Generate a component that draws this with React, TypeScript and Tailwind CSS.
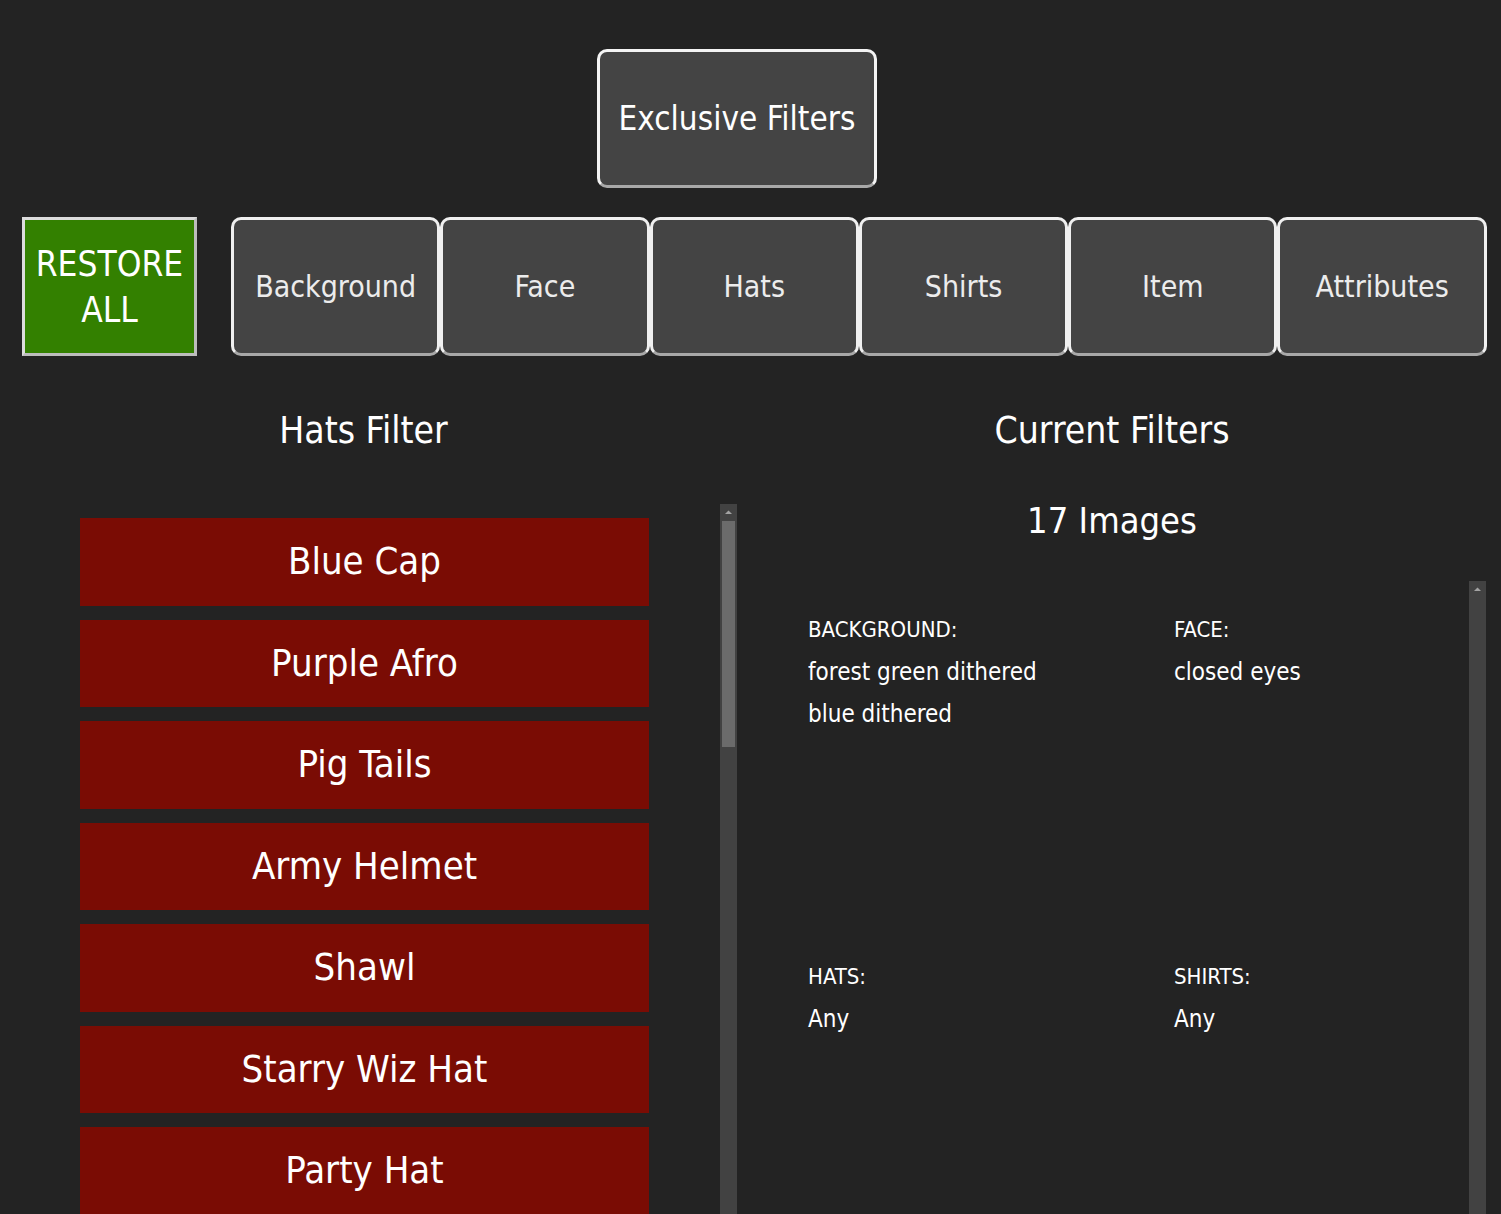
import React from "react";

const CATEGORIES = ["Background", "Face", "Hats", "Shirts", "Item", "Attributes"];

const HATS = [
  "Blue Cap",
  "Purple Afro",
  "Pig Tails",
  "Army Helmet",
  "Shawl",
  "Starry Wiz Hat",
  "Party Hat",
];

const CURRENT = [
  { label: "BACKGROUND:", values: ["forest green dithered", "blue dithered"] },
  { label: "FACE:", values: ["closed eyes"] },
  { label: "HATS:", values: ["Any"] },
  { label: "SHIRTS:", values: ["Any"] },
];

function Scrollbar({ thumb }: { thumb?: boolean }) {
  return (
    <div className="flex w-[17px] shrink-0 flex-col items-center bg-[#424242]">
      <svg width="17" height="17" viewBox="0 0 17 17" className="shrink-0">
        <path d="M5 10 L8.5 6.5 L12 10 Z" fill="#a3a3a3" />
      </svg>
      {thumb && <div className="h-[226px] w-[13px] bg-[#6b6b6b]" />}
    </div>
  );
}

export default function App() {
  return (
    <div className="h-[1214px] overflow-hidden bg-[#232323] font-['DejaVu_Sans_Condensed','DejaVu_Sans',sans-serif] text-white">
      <div className="pl-[597px] pt-[49px]">
        <button className="flex h-[139px] w-[280px] items-center justify-center whitespace-nowrap rounded-[10px] border-[3px] border-[#f4f4f4] border-b-[#a8a8a8] bg-[#444444] text-[33px] text-white">
          Exclusive Filters
        </button>
      </div>

      <div className="mt-[29px] flex h-[139px] pl-[22px]">
        <button className="flex w-[175px] flex-col items-center justify-center border-[3px] border-[#dcdcdc] border-r-[#bdbdbd] border-b-[#bdbdbd] bg-[#338000] text-[35px] leading-[46px] text-white">
          <span>RESTORE</span>
          <span>ALL</span>
        </button>
        <div className="ml-[34px] flex">
          {CATEGORIES.map((c) => (
            <button
              key={c}
              className="flex h-[139px] w-[209.3px] items-center justify-center whitespace-nowrap rounded-[10px] border-[3px] border-[#f0f0f0] border-b-[#a8a8a8] bg-[#444444] text-[30px] text-[#ececec]"
            >
              {c}
            </button>
          ))}
        </div>
      </div>

      <div className="flex">
        <div className="flex w-[737px] flex-col">
          <h2 className="flex h-[148px] items-center justify-center pr-[10px] pt-[2px] text-[37px]">
            Hats Filter
          </h2>
          <div className="flex h-[710px]">
            <div className="flex w-[720px] flex-col gap-[14px] pl-[80px] pt-[14px]">
              {HATS.map((h) => (
                <div
                  key={h}
                  className="flex h-[87.5px] w-[569px] shrink-0 items-center justify-center whitespace-nowrap bg-[#7a0c04] text-[38px]"
                >
                  {h}
                </div>
              ))}
            </div>
            <Scrollbar thumb />
          </div>
        </div>

        <div className="flex w-[750px] flex-col">
          <h2 className="flex h-[148px] items-center justify-center pt-[2px] text-[37px]">
            Current Filters
          </h2>
          <div className="flex h-[77px] justify-center text-[36px] leading-[34px]">
            17 Images
          </div>
          <div className="flex h-[633px] pr-[1px]">
            <div className="grid flex-1 grid-cols-[366px_1fr] auto-rows-[347px] pl-[71px] pt-[28px]">
              {CURRENT.map((f) => (
                <div key={f.label} className="flex flex-col">
                  <span className="text-[22px] leading-[42px]">{f.label}</span>
                  {f.values.map((v) => (
                    <span key={v} className="text-[24px] leading-[42px]">
                      {v}
                    </span>
                  ))}
                </div>
              ))}
            </div>
            <Scrollbar />
          </div>
        </div>
      </div>
    </div>
  );
}
